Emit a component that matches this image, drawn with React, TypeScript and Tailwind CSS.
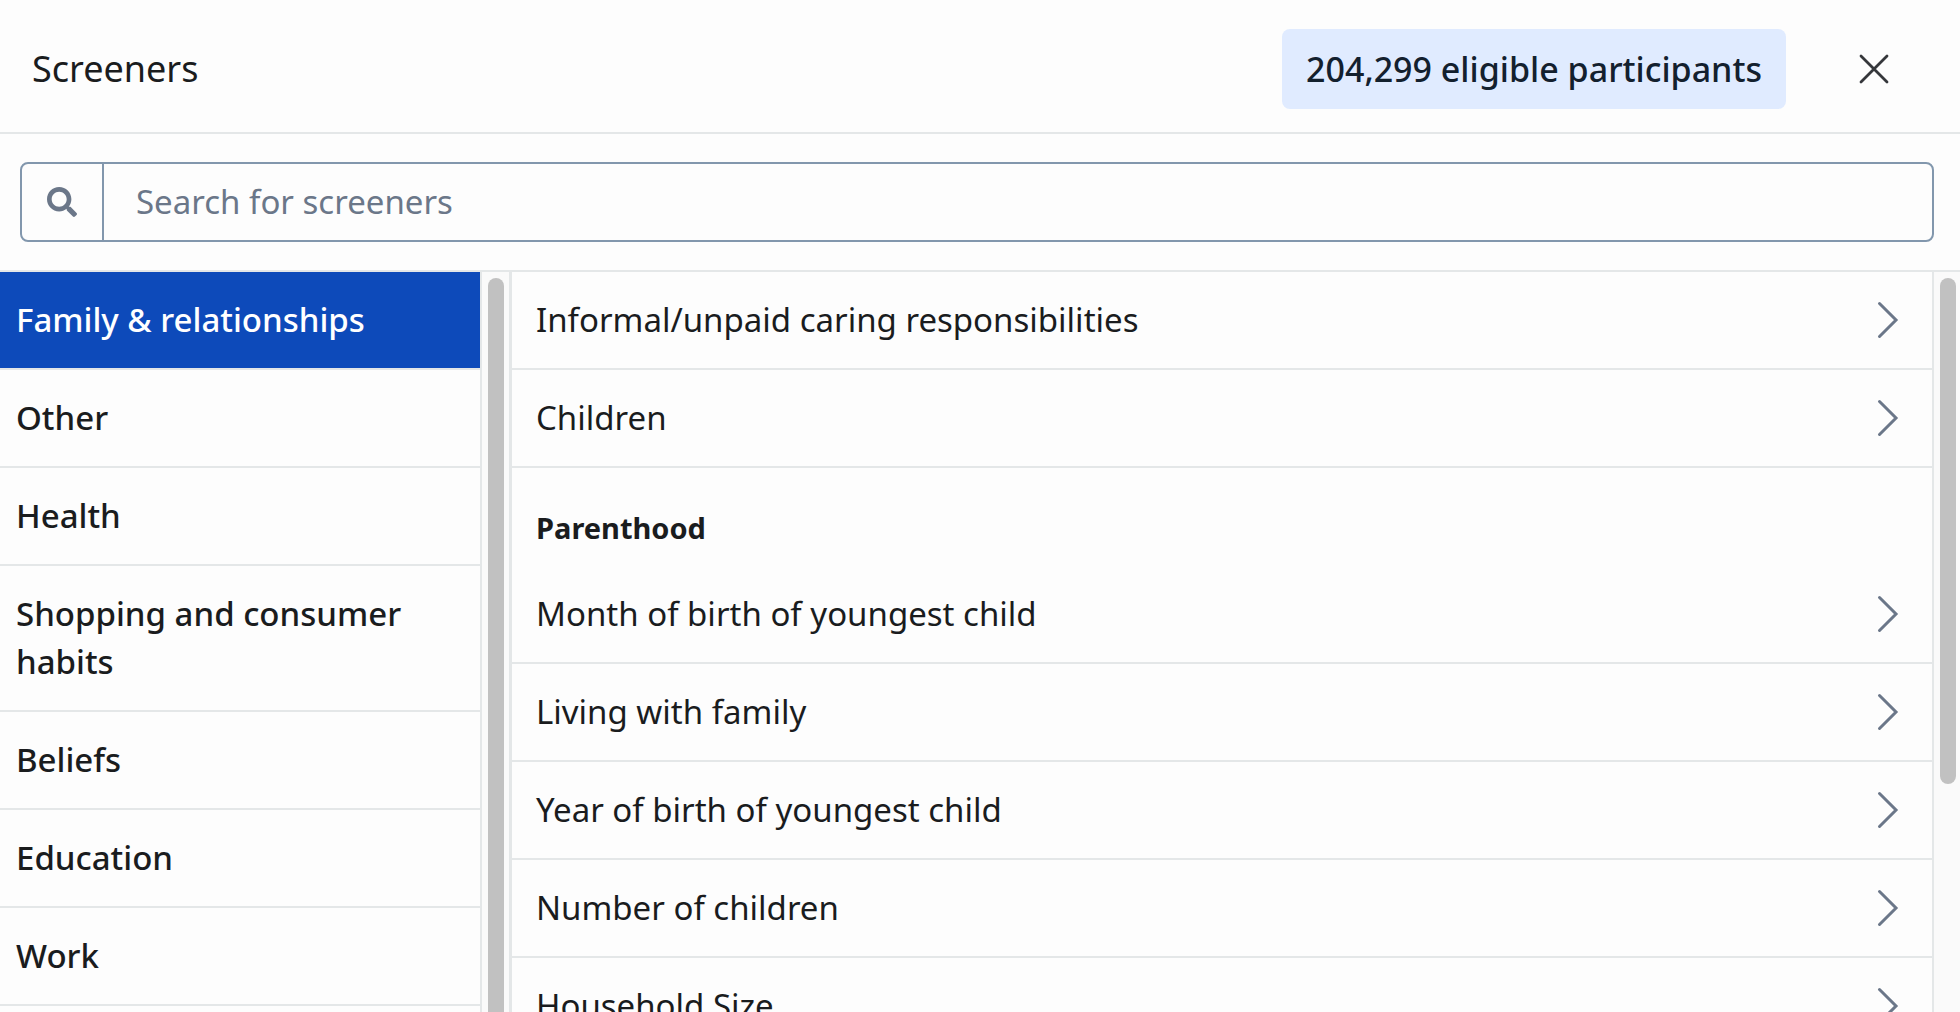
import React, { useState } from "react";
import { FaSearch } from "react-icons/fa";

const categories = [
  "Family & relationships",
  "Other",
  "Health",
  "Shopping and consumer habits",
  "Beliefs",
  "Education",
  "Work",
];

const general = ["Informal/unpaid caring responsibilities", "Children"];

const parenthood = [
  "Month of birth of youngest child",
  "Living with family",
  "Year of birth of youngest child",
  "Number of children",
  "Household Size",
];

function Chevron() {
  return (
    <svg width="24" height="40" viewBox="0 0 24 40" fill="none" aria-hidden="true" className="shrink-0">
      <path d="M3.5 3.5 L20 20 L3.5 36.5" stroke="#6b7789" strokeWidth="3" strokeLinecap="round" />
    </svg>
  );
}

function ScreenerRow({ label }: { label: string }) {
  return (
    <li className="border-b-2 border-[#e4e7e8]">
      <button
        type="button"
        className="flex w-full items-center justify-between py-6 pr-8 pl-6 text-left text-[33px] leading-[48px]"
      >
        {label}
        <Chevron />
      </button>
    </li>
  );
}

export default function App() {
  const [selected, setSelected] = useState(categories[0]);

  return (
    <div
      role="dialog"
      aria-labelledby="screeners-title"
      className="flex h-screen flex-col overflow-hidden bg-[#fdfdfd] font-['Noto_Sans',sans-serif] text-[#1a1c1e]"
    >
      <header className="flex shrink-0 items-center justify-between border-b-2 border-[#e4e7e8] pt-[29px] pr-[68px] pb-[23px] pl-8">
        <h1 id="screeners-title" className="text-[36px] leading-[48px]">
          Screeners
        </h1>
        <div className="flex items-center gap-[70px]">
          <p className="rounded-lg bg-[#e0ebff] px-6 py-4 text-[34px] leading-[48px] font-medium text-[#13202e]">
            204,299 eligible participants
          </p>
          <button type="button" aria-label="Close">
            <svg width="36" height="36" viewBox="0 0 36 36" fill="none" aria-hidden="true">
              <path d="M5 5 L31 31 M31 5 L5 31" stroke="#35373b" strokeWidth="2.8" strokeLinecap="round" />
            </svg>
          </button>
        </div>
      </header>

      <div className="shrink-0 border-b-2 border-[#e4e7e8] pt-7 pr-[26px] pb-7 pl-5">
        <div className="flex h-20 rounded-lg border-2 border-[#8297ad]">
          <label
            htmlFor="screener-search"
            aria-label="Search for screeners"
            className="flex w-[82px] shrink-0 items-center justify-center border-r-2 border-[#8297ad] text-[#6b7789]"
          >
            <FaSearch size={30} />
          </label>
          <input
            id="screener-search"
            type="text"
            placeholder="Search for screeners"
            className="min-w-0 flex-1 bg-transparent px-8 text-[33px] outline-none placeholder:text-[#6b7789]"
          />
        </div>
      </div>

      <div className="flex min-h-0 flex-1">
        <nav aria-label="Categories" className="flex w-[512px] shrink-0 border-r-[3px] border-[#e4e7e8]">
          <ul className="min-w-0 flex-1 overflow-hidden">
            {categories.map((name) => (
              <li key={name} className="border-b-2 border-[#e4e7e8]">
                <button
                  type="button"
                  aria-pressed={name === selected}
                  onClick={() => setSelected(name)}
                  className={
                    name === selected
                      ? "w-full bg-[#0d4aba] px-4 py-6 text-left text-[33px] leading-[48px] font-medium text-white"
                      : "w-full px-4 py-6 text-left text-[33px] leading-[48px] font-medium"
                  }
                >
                  {name}
                </button>
              </li>
            ))}
          </ul>
          <div className="w-[29px] border-l-2 border-[#e4e7e8] bg-[#fafafa] pt-1.5 pl-1.5">
            <div className="h-full w-4 rounded-t-full bg-[#c1c1c1]" />
          </div>
        </nav>

        <main className="flex min-w-0 flex-1">
          <div className="min-w-0 flex-1 overflow-hidden">
            <ul>
              {general.map((label) => (
                <ScreenerRow key={label} label={label} />
              ))}
            </ul>
            <h2 className="px-6 pt-9 pb-3.5 text-[29px] leading-[48px] font-bold">Parenthood</h2>
            <ul>
              {parenthood.map((label) => (
                <ScreenerRow key={label} label={label} />
              ))}
            </ul>
          </div>
          <div className="w-7 shrink-0 border-l-2 border-[#e4e7e8] bg-[#fafafa] pt-1.5 pl-1.5">
            <div className="h-[69%] w-4 rounded-full bg-[#c1c1c1]" />
          </div>
        </main>
      </div>
    </div>
  );
}
